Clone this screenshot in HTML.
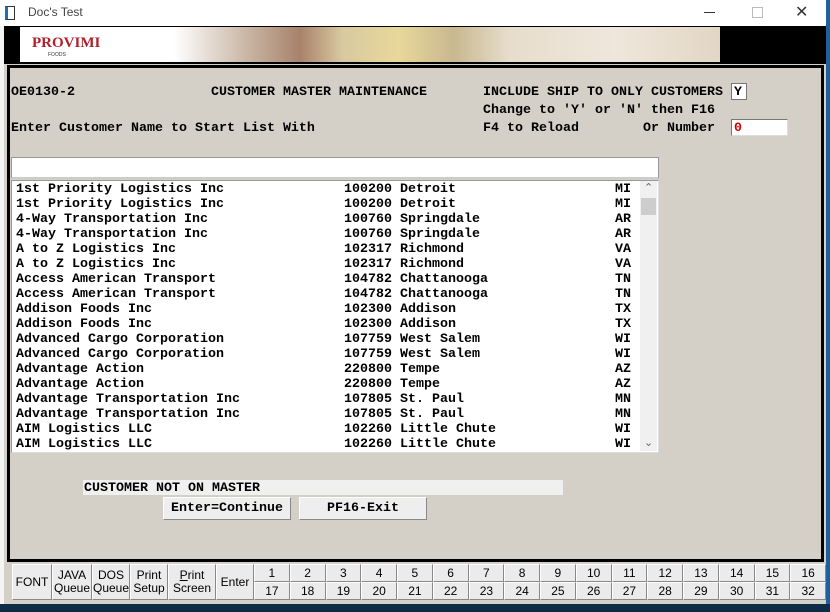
<!DOCTYPE html>
<html><head><style>
*{margin:0;padding:0;box-sizing:border-box}
body{width:830px;height:612px;overflow:hidden;background:#0b2a4a;position:relative;font-family:"Liberation Mono",monospace;}
.a{position:absolute}
.t{position:absolute;font-family:"Liberation Mono",monospace;font-weight:bold;font-size:13.33px;line-height:15px;white-space:pre;color:#000}
.btn{position:absolute;background:#eeeeee;border:1px solid #fff;border-right-color:#888;border-bottom-color:#888;font-family:"Liberation Mono",monospace;font-weight:bold;font-size:13.33px;text-align:center;line-height:21px}
.tb{position:absolute;background:#ebebeb;border:1px solid #fff;border-right-color:#888;border-bottom-color:#888;font-family:"Liberation Sans",sans-serif;font-size:12px;text-align:center;color:#000;display:flex;align-items:center;justify-content:center;line-height:13px}
</style></head><body>
<div class="a" style="left:0;top:0;width:826px;height:604px;background:#d4d0c8"></div>
<div class="a" style="left:826px;top:0;width:4px;height:612px;background:#1f5f9a"></div>
<div class="a" style="left:0;top:0;width:826px;height:26px;background:#fff"></div>
<div class="a" style="left:5px;top:6px;width:10px;height:14px;border:1px solid #333;border-left:3px solid #1e6fb0"></div>
<div class="a" style="left:28px;top:5px;font-family:'Liberation Sans',sans-serif;font-size:12px;color:#444">Doc's Test</div>
<div class="a" style="left:704px;top:12px;width:11px;height:1px;background:#333"></div>
<div class="a" style="left:752px;top:7px;width:11px;height:11px;border:1px solid #bbb"></div>
<div class="a" style="left:795px;top:2px;font-family:'Liberation Sans',sans-serif;font-size:16px;color:#333">✕</div>
<div class="a" style="left:0;top:26px;width:4px;height:578px;background:#f4f4f4"></div>
<div class="a" style="left:4px;top:26px;width:822px;height:38px;background:#000"></div>
<div class="a" style="left:20px;top:27px;width:700px;height:35px;background:linear-gradient(90deg,#fff 0%,#fff 22%,#cbb9a8 32%,#a8826a 40%,#d8c9a0 46%,#e8d89a 54%,#c9b890 62%,#e6ddcc 70%,#efe7dc 85%,#e2d6c4 100%)"></div>
<div class="a" style="left:32px;top:35px;font-family:'Liberation Serif',serif;font-weight:bold;font-size:15px;color:#b0202a;letter-spacing:0">PROVIMI</div>
<div class="a" style="left:48px;top:52px;font-family:'Liberation Sans',sans-serif;font-size:5px;color:#333">FOODS</div>
<div class="a" style="left:7px;top:65px;width:817px;height:497px;border:3px solid #000;background:#d4d0c8"></div>
<div class="t" style="left:11px;top:85px">OE0130-2</div>
<div class="t" style="left:211px;top:85px">CUSTOMER MASTER MAINTENANCE</div>
<div class="t" style="left:483px;top:85px">INCLUDE SHIP TO ONLY CUSTOMERS</div>
<div class="a" style="left:731px;top:83px;width:16px;height:17px;background:#fff;border:1px solid #777"></div>
<div class="t" style="left:734px;top:85px">Y</div>
<div class="t" style="left:483px;top:103px">Change to 'Y' or 'N' then F16</div>
<div class="t" style="left:11px;top:121px">Enter Customer Name to Start List With</div>
<div class="t" style="left:483px;top:121px">F4 to Reload</div>
<div class="t" style="left:643px;top:121px">Or Number</div>
<div class="a" style="left:731px;top:119px;width:57px;height:17px;background:#fff;border:1px solid #777;border-right-color:#ddd;border-bottom-color:#ddd"></div>
<div class="t" style="left:734px;top:121px;color:#d00000">0</div>
<div class="a" style="left:11px;top:157px;width:648px;height:22px;background:#fff;border:1px solid #999;border-bottom:2px solid #ccc"></div>
<div class="a" style="left:11px;top:180px;width:648px;height:273px;background:#fff;border:1px solid #999;border-right-color:#ddd;border-bottom-color:#ddd"></div>
<div class="a" style="left:640px;top:181px;width:17px;height:270px;background:#f0f0f0"></div>
<div class="a" style="left:641px;top:198px;width:15px;height:17px;background:#cdcdcd"></div>
<div class="a" style="left:644px;top:181px;font-size:11px;color:#666;font-family:'Liberation Sans',sans-serif">⌃</div>
<div class="a" style="left:644px;top:436px;font-size:11px;color:#666;font-family:'Liberation Sans',sans-serif">⌄</div>
<div class="t" style="left:16px;top:182px">1st Priority Logistics Inc
1st Priority Logistics Inc
4-Way Transportation Inc
4-Way Transportation Inc
A to Z Logistics Inc
A to Z Logistics Inc
Access American Transport
Access American Transport
Addison Foods Inc
Addison Foods Inc
Advanced Cargo Corporation
Advanced Cargo Corporation
Advantage Action
Advantage Action
Advantage Transportation Inc
Advantage Transportation Inc
AIM Logistics LLC
AIM Logistics LLC</div>
<div class="t" style="left:344px;top:182px">100200 Detroit
100200 Detroit
100760 Springdale
100760 Springdale
102317 Richmond
102317 Richmond
104782 Chattanooga
104782 Chattanooga
102300 Addison
102300 Addison
107759 West Salem
107759 West Salem
220800 Tempe
220800 Tempe
107805 St. Paul
107805 St. Paul
102260 Little Chute
102260 Little Chute</div>
<div class="t" style="left:615px;top:182px">MI
MI
AR
AR
VA
VA
TN
TN
TX
TX
WI
WI
AZ
AZ
MN
MN
WI
WI</div>
<div class="a" style="left:83px;top:480px;width:480px;height:15px;background:#f0f0f0"></div>
<div class="t" style="left:84px;top:481px">CUSTOMER NOT ON MASTER</div>
<div class="btn" style="left:163px;top:497px;width:128px;height:23px">Enter=Continue</div>
<div class="btn" style="left:299px;top:497px;width:128px;height:23px">PF16-Exit</div>
<div class="tb" style="left:12px;top:564px;width:40px;height:36px">FONT</div>
<div class="tb" style="left:52px;top:564px;width:40px;height:36px">JAVA<br>Queue</div>
<div class="tb" style="left:92px;top:564px;width:38px;height:36px">DOS<br>Queue</div>
<div class="tb" style="left:130px;top:564px;width:38px;height:36px">Print<br>Setup</div>
<div class="tb" style="left:168px;top:564px;width:48px;height:36px"><span><u>P</u>rint<br>Screen</span></div>
<div class="tb" style="left:216px;top:564px;width:38px;height:36px">Enter</div>
<div id="nums"></div>
<script>
var h='';for(var i=0;i<16;i++){var x=254+i*35.75;
h+='<div class="tb" style="left:'+x+'px;top:564px;width:35.75px;height:18px">'+(i+1)+'</div>';
h+='<div class="tb" style="left:'+x+'px;top:582px;width:35.75px;height:18px">'+(i+17)+'</div>';}
document.getElementById('nums').outerHTML=h;
</script>
<div class="a" style="left:0;top:604px;width:830px;height:8px;background:#0d2b47"></div>
</body></html>
